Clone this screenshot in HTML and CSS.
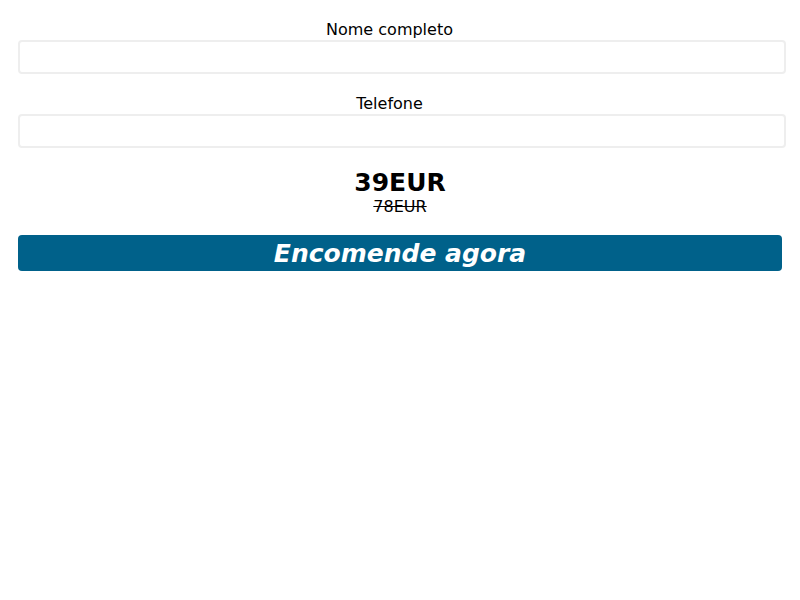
FILE: index.html
```html
<!DOCTYPE html>
<html>
<head>
<meta charset="utf-8">
<link rel="stylesheet" href="styles.css">
</head>
<body>
<form class="order">
  <div class="field">
    <label class="label">Nome completo</label>
    <input class="input" type="text">
  </div>
  <div class="field">
    <label class="label">Telefone</label>
    <input class="input" type="tel">
  </div>
  <div class="price">
    <div class="price-now">39EUR</div>
    <div class="price-old">78EUR</div>
  </div>
  <button class="btn" type="button">Encomende agora</button>
</form>
</body>
</html>
```
FILE: styles.css
```css
html, body {
  margin: 0;
  padding: 0;
  background: #fff;
}
body {
  font-family: "DejaVu Sans", sans-serif;
  color: #000;
}
.order {
  display: flex;
  flex-direction: column;
  padding: 20px 14px 0 18px;
}
.field {
  display: flex;
  flex-direction: column;
  margin-bottom: 20px;
}
.label {
  display: block;
  text-align: center;
  font-size: 16px;
  line-height: 20px;
  padding-right: 25px;
}
.input {
  box-sizing: border-box;
  width: 768px;
  height: 34px;
  margin: 0;
  border: 2px solid #eeeeee;
  border-radius: 4px;
  background: #fff;
  font: inherit;
}
.price {
  text-align: center;
  margin-top: 0;
  padding-right: 4px;
}
.price-now {
  font-size: 25px;
  font-weight: bold;
  line-height: 30px;
}
.price-old {
  font-size: 16px;
  line-height: 18px;
  text-decoration: line-through;
}
.btn {
  margin-top: 19px;
  width: 764px;
  height: 36px;
  border: none;
  border-radius: 4px;
  background: #00618a;
  color: #fff;
  font-family: "DejaVu Sans", sans-serif;
  font-size: 25px;
  font-weight: bold;
  font-style: italic;
  padding: 0;
  line-height: 38px;
}
```
